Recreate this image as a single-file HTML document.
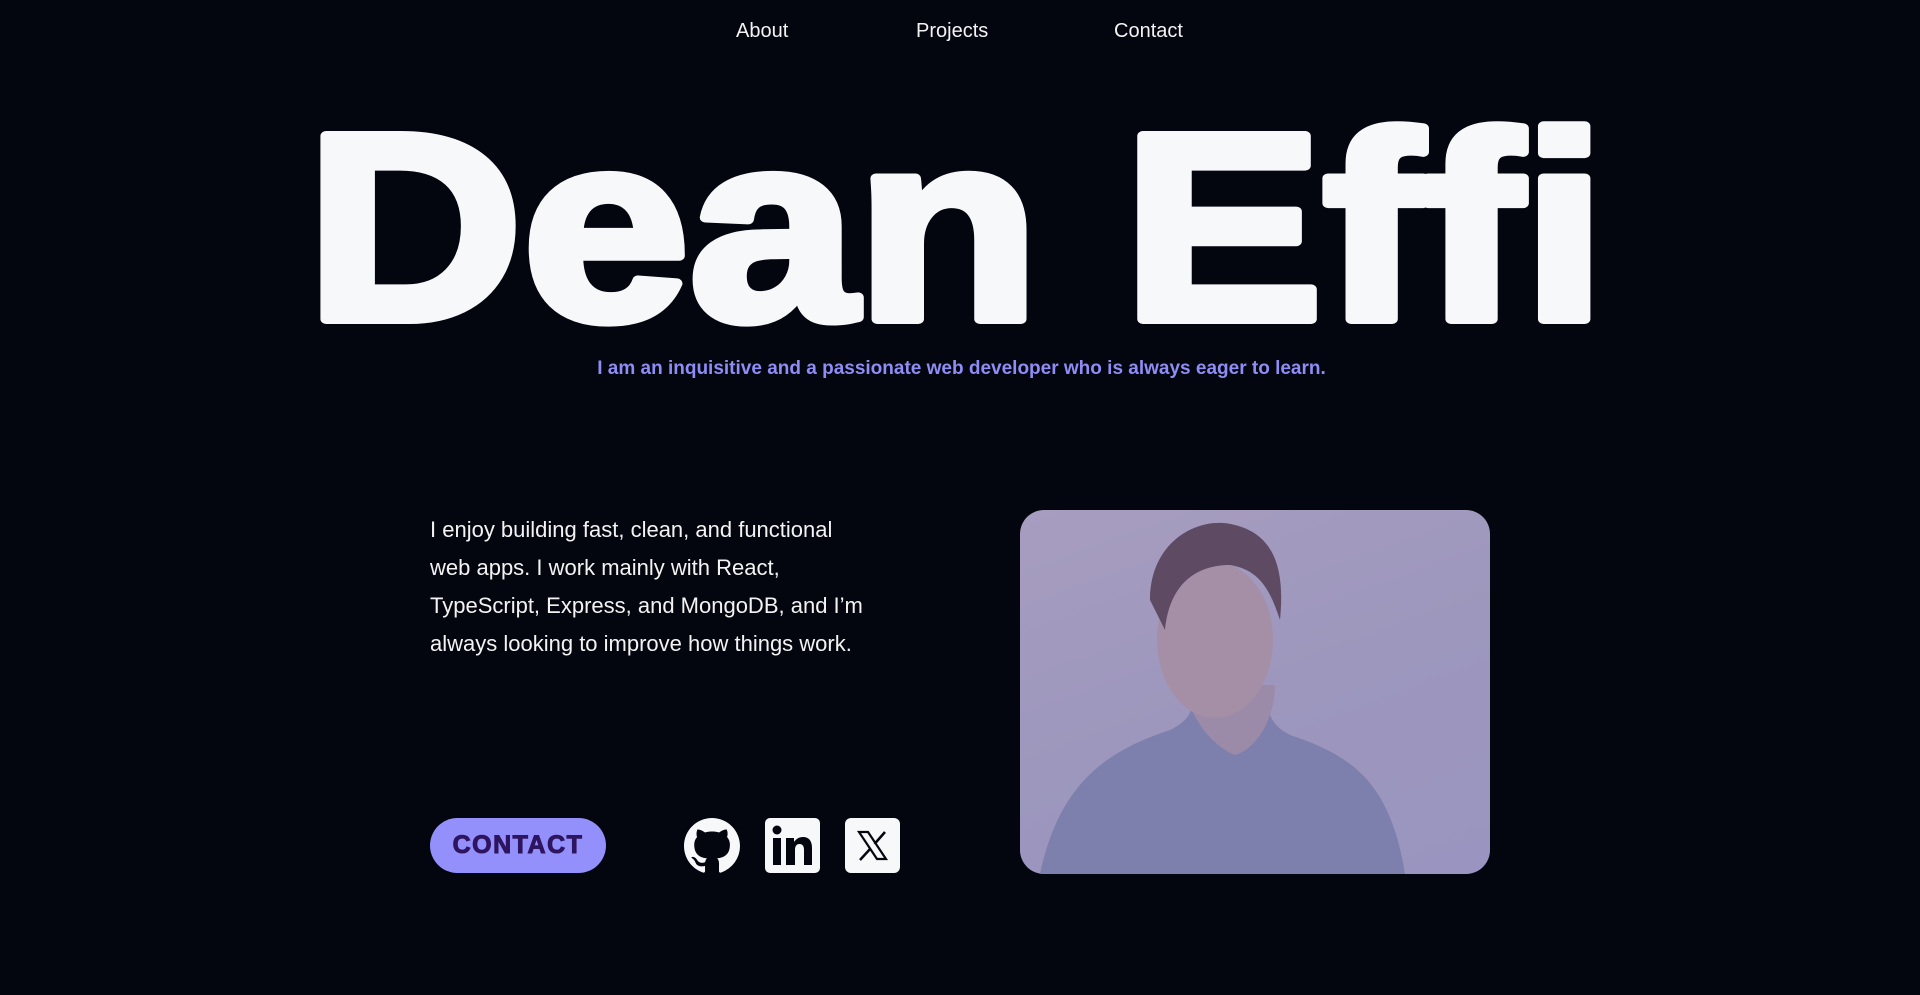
<!DOCTYPE html>
<html><head><meta charset="utf-8"><style>
*{margin:0;padding:0;box-sizing:border-box}
body{width:1920px;height:995px;background:#03060f;overflow:hidden;font-family:"Liberation Sans",sans-serif;color:#f7f8fa;position:relative}
.nav{position:absolute;top:20px;font-size:20px;color:#f3f3f3}
.sub{position:absolute;top:358px;left:0;width:1920px;text-align:center;font-weight:bold;font-size:19px;color:#8f8cf5;padding-left:3px}
.p{position:absolute;left:430px;top:511px;width:440px;font-size:22px;line-height:38px;color:#f3f3f3}
.btn{position:absolute;left:430px;top:818px;width:176px;height:55px;border-radius:28px;background:#9390fb;color:#2e1560;font-weight:900;font-size:25px;letter-spacing:1.5px;text-align:center;line-height:55px;-webkit-text-stroke:1px #2e1560}
.photo{position:absolute;left:1020px;top:510px;width:470px;height:364px;border-radius:24px;overflow:hidden;background:linear-gradient(160deg,#a79dc0,#9d97bd 50%,#9a95c0)}
</style></head><body>
<div class="nav" style="left:736px">About</div>
<div class="nav" style="left:916px">Projects</div>
<div class="nav" style="left:1114px">Contact</div>
<svg style="position:absolute;left:0;top:0" width="1920" height="340">
<text x="306" y="319" font-family="Liberation Sans" font-weight="bold" font-size="266" fill="#f7f8fa" stroke="#f7f8fa" stroke-width="10" stroke-linejoin="round" textLength="1300" lengthAdjust="spacingAndGlyphs">Dean Effi</text>
</svg>
<div class="sub">I am an inquisitive and a passionate web developer who is always eager to learn.</div>
<div class="p">I enjoy building fast, clean, and functional web apps. I work mainly with React, TypeScript, Express, and MongoDB, and I’m always looking to improve how things work.</div>
<div class="btn">CONTACT</div>
<svg style="position:absolute;left:684px;top:818px" width="56" height="56" viewBox="0 0 16 16"><path fill="#f7f8fa" d="M8 0C3.58 0 0 3.58 0 8c0 3.54 2.29 6.53 5.470 7.59.4.07.55-.17.55-.38 0-.19-.01-.82-.01-1.49-2.01.37-2.53-.49-2.690-.94-.09-.23-.48-.94-.82-1.13-.28-.15-.68-.52-.01-.53.63-.01 1.08.58 1.23.82.72 1.21 1.87.87 2.33.66.07-.52.28-.87.51-1.07-1.78-.2-3.64-.89-3.64-3.95 0-.87.31-1.59.82-2.15-.08-.2-.36-1.02.08-2.12 0 0 .67-.21 2.2.82.64-.18 1.32-.27 2-.27.68 0 1.36.09 2 .27 1.53-1.04 2.2-.82 2.2-.82.44 1.1.16 1.92.08 2.12.51.56.82 1.27.82 2.15 0 3.07-1.87 3.75-3.65 3.95.29.25.54.73.54 1.48 0 1.07-.01 1.93-.01 2.2 0 .21.15.46.55.38A8.013 8.013 0 0 0 16 8c0-4.42-3.58-8-8-8z"/></svg>
<svg style="position:absolute;left:765px;top:818px" width="55" height="55" viewBox="0 0 55 55"><rect width="55" height="55" rx="5" fill="#f7f8fa"/><rect x="8" y="20" width="8" height="27" fill="#03060f"/><circle cx="12" cy="12" r="4.5" fill="#03060f"/><path d="M21 20h8v4c2-3 5-5 9-5 6 0 9 4 9 11v17h-8V32c0-4-1.5-6-4.5-6S30 28 30 32v15h-9z" fill="#03060f"/></svg>
<svg style="position:absolute;left:845px;top:818px" width="55" height="55" viewBox="0 0 55 55"><rect width="55" height="55" rx="6" fill="#f7f8fa"/><path d="M14 14h9l18 27h-9z" fill="none" stroke="#03060f" stroke-width="2.2"/><path d="M40 14L29.5 26M25.5 30.5L15 42" stroke="#03060f" stroke-width="2.5"/></svg>
<div class="photo">
<svg width="470" height="364" viewBox="0 0 470 364">
<path d="M20 364 C40 270 90 240 150 220 C170 210 175 200 170 180 L250 180 C245 200 250 215 270 225 C330 245 370 270 385 364Z" fill="#7d7fad"/>
<path d="M165 175 C170 215 200 240 215 245 C235 240 255 210 255 175Z" fill="#9b8aa8"/>
<ellipse cx="195" cy="130" rx="58" ry="78" fill="#a48fa7"/>
<path d="M130 90 C130 30 180 5 215 15 C255 25 265 60 260 110 C250 80 240 60 210 55 C180 55 150 70 145 120 Z" fill="#5e4a63"/>
</svg>
</div>
</body></html>
